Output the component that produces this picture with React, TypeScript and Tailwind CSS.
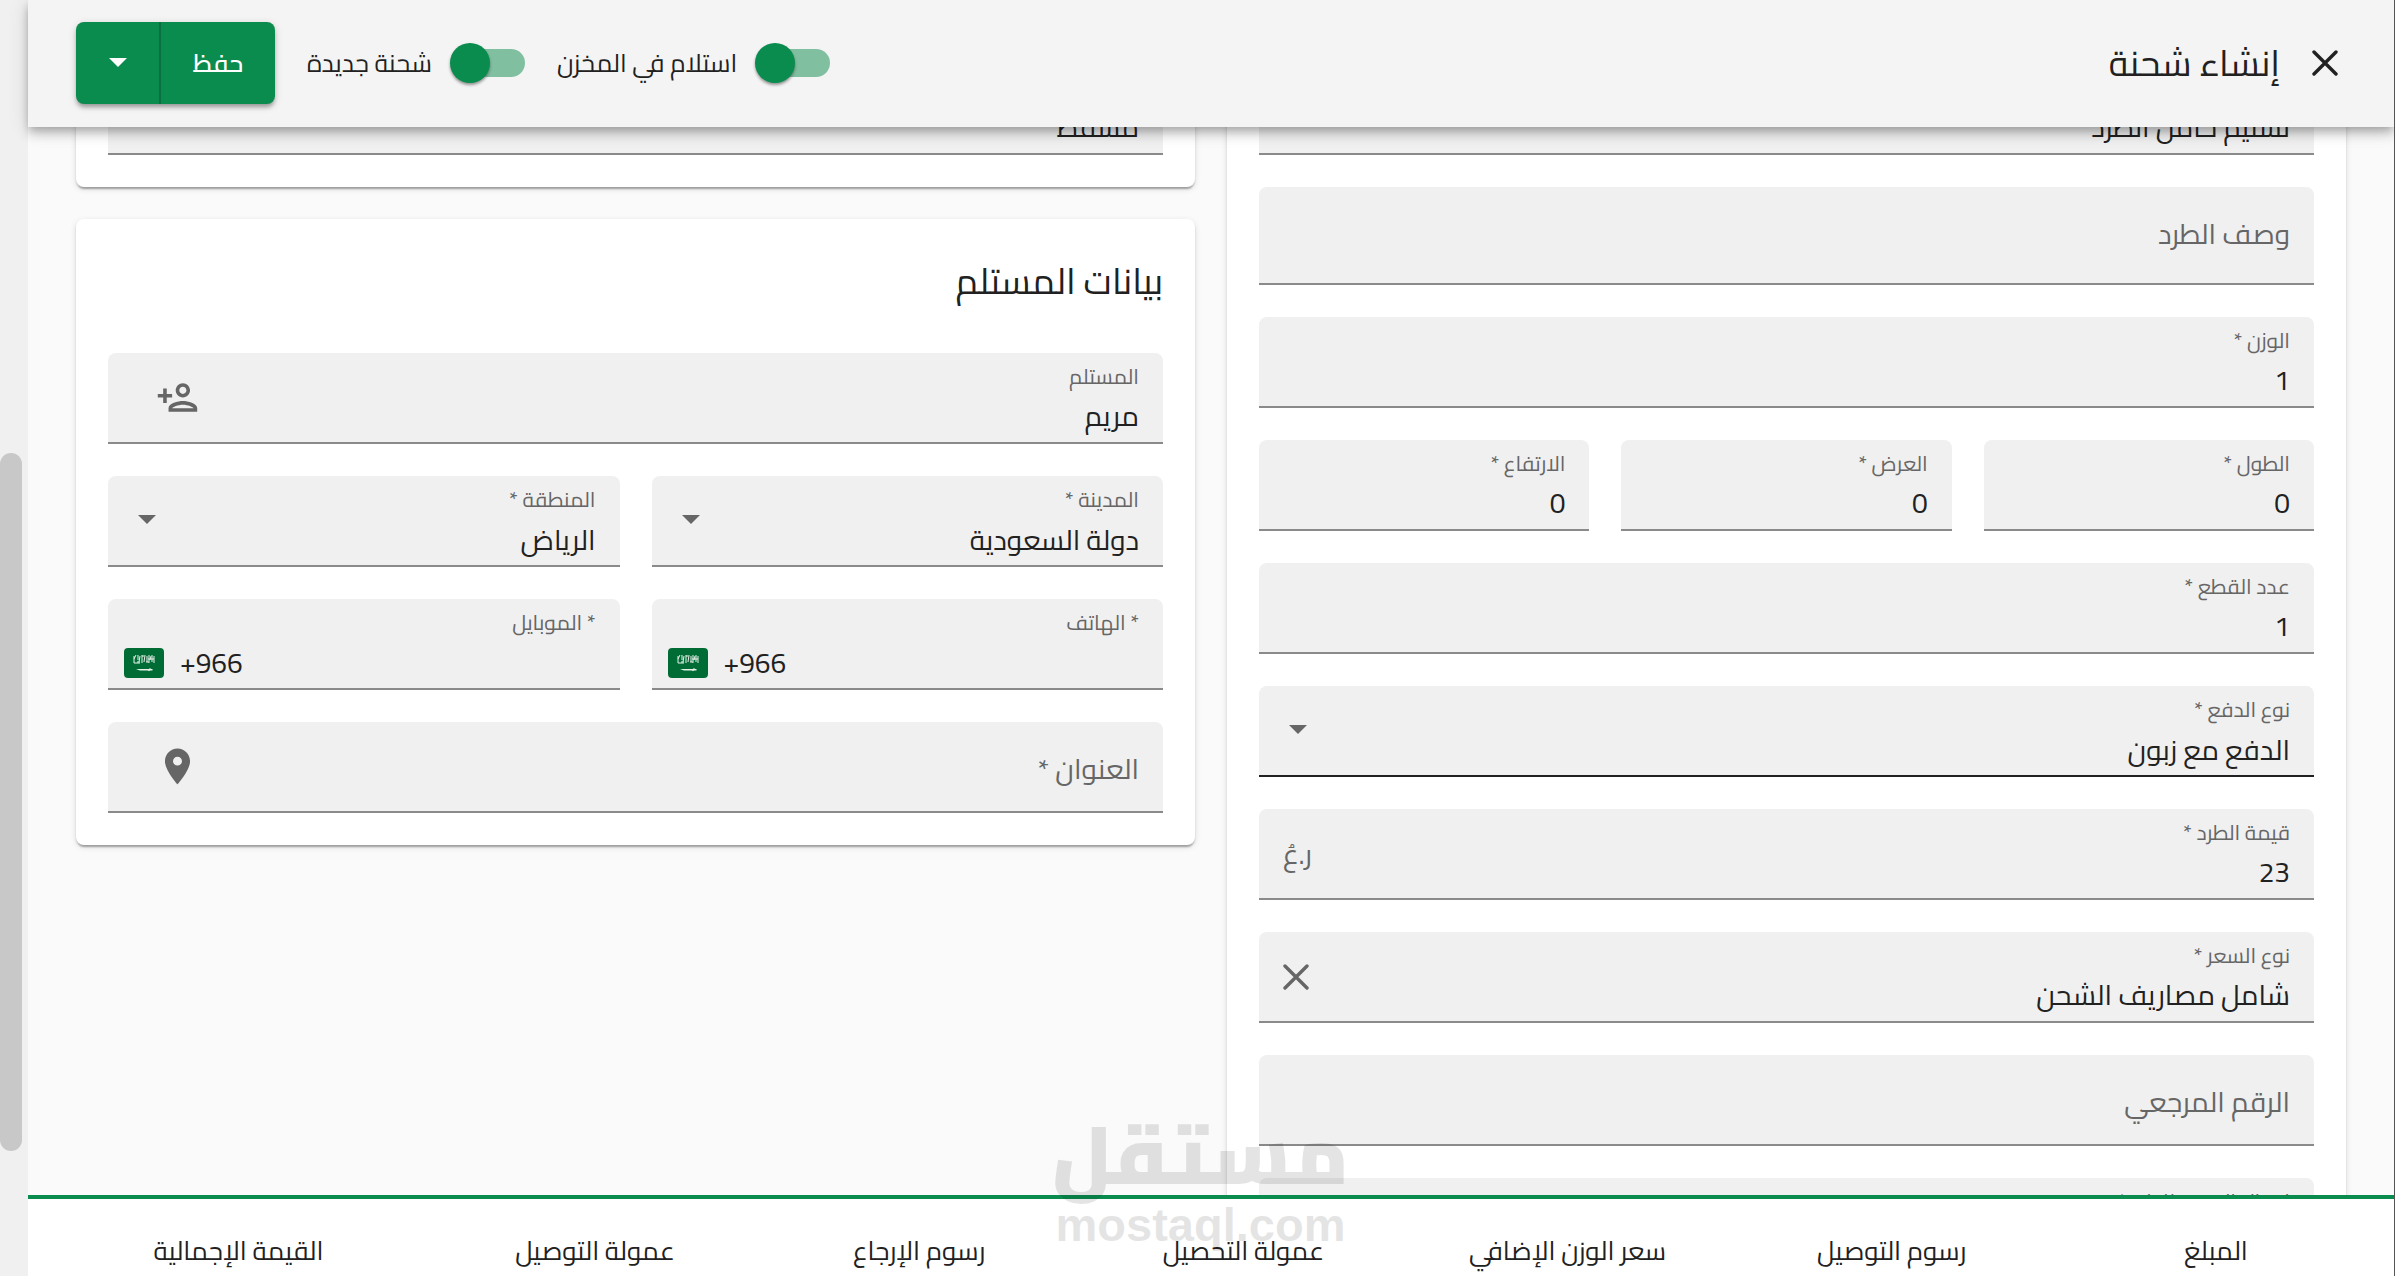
import { useId, type ReactNode } from 'react';
import { MdLocationOn } from 'react-icons/md';

const fieldBox =
  'h-[91px] rounded-t-lg border-b-2 border-[#8a8a8a] bg-[#f0f0f0] flex items-stretch min-w-0';
const controlText = 'text-[28px] text-[#212121]';

function Caret({ className = 'text-[#666]' }: { className?: string }) {
  return (
    <svg viewBox="0 0 18 9" className={`h-[9px] w-[18px] ${className}`} fill="currentColor" aria-hidden="true">
      <path d="M0 0h18L9 9z" />
    </svg>
  );
}

function Cross({ className = '' }: { className?: string }) {
  return (
    <svg
      viewBox="0 0 26 26"
      className={`size-[26px] ${className}`}
      fill="none"
      stroke="currentColor"
      strokeWidth="3.4"
      strokeLinecap="round"
      aria-hidden="true"
    >
      <path d="M2 2l22 22M24 2L2 24" />
    </svg>
  );
}

function PersonAdd() {
  return (
    <svg viewBox="0 0 24 24" className="size-[43px]" fill="currentColor" aria-hidden="true">
      <path d="M15 12c2.21 0 4-1.79 4-4s-1.79-4-4-4-4 1.79-4 4 1.79 4 4 4zm0-6c1.1 0 2 .9 2 2s-.9 2-2 2-2-.9-2-2 .9-2 2-2zm0 8c-2.67 0-8 1.34-8 4v2h16v-2c0-2.66-5.33-4-8-4zm-6 4c.22-.72 3.31-2 6-2 2.7 0 5.8 1.29 6 2H9zm-3-3v-3h3v-2H6V7H4v3H1v2h3v3z" />
    </svg>
  );
}

function SaudiFlag() {
  return (
    <svg viewBox="0 0 40 30" className="h-[30px] w-10 shrink-0" aria-hidden="true">
      <rect width="40" height="30" rx="4" fill="#006c35" />
      <g stroke="#e6f1ea" strokeWidth="1" fill="none">
        <path d="M10 8v7M12 7l-2 4M13 14h3M14 7v5M16 8l-1 6M18 7v8M20 8h-2M21 7l-1 7M23 8v6M22 14h3M25 7v8M27 8l-1 4M28 7v7M30 8v7M10 15h6M24 11h6" />
      </g>
      <path d="M12 21h13l1-1 1 1h1.500v1.500h-2.500l-1 .8-1-.8H16z" fill="#e6f1ea" />
    </svg>
  );
}

type FieldProps = { label: string; value?: string; end?: ReactNode };

function Field({ label, value = '', end }: FieldProps) {
  const id = useId();
  return (
    <div className={fieldBox}>
      <div className="flex min-w-0 flex-1 flex-col pt-1 ps-6">
        <label htmlFor={id} className="text-[21px] leading-10 text-[#666]">
          {label}
        </label>
        <input
          id={id}
          defaultValue={value}
          className={`h-[38px] w-full bg-transparent leading-[38px] outline-none ${controlText}`}
        />
      </div>
      {end}
    </div>
  );
}

function EmptyField({ label, end, tall = false }: { label: string; end?: ReactNode; tall?: boolean }) {
  const id = useId();
  return (
    <div
      className={
        tall ? 'flex h-[98px] rounded-t-lg border-b-2 border-[#8a8a8a] bg-[#f0f0f0] pb-0.5' : `${fieldBox} pt-1`
      }
    >
      <label htmlFor={id} className="sr-only">
        {label}
      </label>
      <input
        id={id}
        placeholder={label}
        className="min-w-0 flex-1 bg-transparent ps-6 text-[28px] text-[#212121] outline-none placeholder:text-[#666] placeholder:opacity-100"
      />
      {end}
    </div>
  );
}

function SelectField({ label, value, active = false }: { label: string; value: string; active?: boolean }) {
  const id = useId();
  return (
    <div
      className={
        active
          ? 'flex h-[91px] min-w-0 items-stretch rounded-t-lg border-b-2 border-[#212121] bg-[#f0f0f0]'
          : fieldBox
      }
    >
      <div className="flex min-w-0 flex-1 flex-col pt-1 ps-6">
        <label htmlFor={id} className="text-[21px] leading-10 text-[#666]">
          {label}
        </label>
        <select
          id={id}
          className={`h-10 w-full appearance-none bg-transparent leading-10 outline-none ${controlText}`}
        >
          <option>{value}</option>
        </select>
      </div>
      <span className="flex items-center pe-[30px] pb-0.5">
        <Caret />
      </span>
    </div>
  );
}

function PhoneField({ label }: { label: string }) {
  const id = useId();
  return (
    <div className={fieldBox}>
      <div className="flex min-w-0 flex-1 flex-col pt-1">
        <label htmlFor={id} className="ps-6 text-[21px] leading-10 text-[#666]">
          {label}
        </label>
        <div dir="ltr" className="flex items-center gap-4 px-4">
          <SaudiFlag />
          <input
            id={id}
            type="tel"
            defaultValue="+966"
            className={`h-10 min-w-0 flex-1 bg-transparent leading-10 outline-none ${controlText}`}
          />
        </div>
      </div>
    </div>
  );
}

function Switch({ label }: { label: string }) {
  return (
    <label className="flex cursor-pointer items-center gap-[18px]">
      <span className="relative flex h-10 w-[75px] items-center">
        <input type="checkbox" role="switch" defaultChecked className="peer sr-only" />
        <span className="h-7 w-[72px] rounded-full bg-[#81bfa1]" />
        <span className="absolute left-0 size-10 rounded-full bg-[#0b8c4f] shadow-[0_2px_3px_rgba(0,0,0,0.4)]" />
      </span>
      <span className="text-[25px] leading-10 text-[#212121]">{label}</span>
    </label>
  );
}

function Card({ children }: { children: ReactNode }) {
  return (
    <section className="flex flex-col gap-8 rounded-lg bg-white p-8 shadow-[0_4px_2px_-2px_rgba(0,0,0,0.2),0_2px_2px_rgba(0,0,0,0.14),0_2px_6px_rgba(0,0,0,0.12)]">
      {children}
    </section>
  );
}

const totals = [
  'المبلغ',
  'رسوم التوصيل',
  'سعر الوزن الإضافي',
  'عمولة التحصيل',
  'رسوم الإرجاع',
  'عمولة التوصيل',
  'القيمة الإجمالية',
];

export default function App() {
  return (
    <div
      dir="rtl"
      className="relative flex h-screen overflow-hidden border-r border-[#555] bg-[#fafafa] font-['Cairo','Noto_Sans_Arabic','DejaVu_Sans',sans-serif] text-[#212121]"
    >
      <div className="flex min-w-0 flex-1 flex-col">
        <header className="z-10 flex h-[127px] shrink-0 items-center justify-between bg-[#f4f4f4] ps-14 pe-12 pb-0.5 shadow-[0_4px_8px_-2px_rgba(0,0,0,0.2),0_8px_10px_rgba(0,0,0,0.14),0_2px_20px_rgba(0,0,0,0.12)]">
          <div className="flex items-center gap-8">
            <button type="button" aria-label="إغلاق">
              <Cross />
            </button>
            <h1 className="text-[36px] leading-10">إنشاء شحنة</h1>
          </div>
          <div className="flex items-center gap-8">
            <Switch label="استلام في المخزن" />
            <Switch label="شحنة جديدة" />
            <div className="flex h-[82px] overflow-hidden rounded-lg bg-[#0b8c4f] text-white shadow-[0_4px_4px_-1px_rgba(0,0,0,0.3),0_2px_8px_rgba(0,0,0,0.15)]">
              <button type="button" className="w-[116px] border-l-2 border-[#08703f] text-[25px] font-semibold">
                حفظ
              </button>
              <button type="button" aria-label="المزيد" className="flex w-[83px] items-center justify-center">
                <Caret className="text-white" />
              </button>
            </div>
          </div>
        </header>

        <main className="min-h-0 flex-1 overflow-hidden px-12">
          <div className="-mt-[95px] grid grid-cols-2 items-start gap-8">
            <Card>
              <Field label="محتوى الطرد *" value="تسليم حامل الطرد" />
              <EmptyField label="وصف الطرد" tall />
              <Field label="الوزن *" value="1" />
              <div className="grid grid-cols-3 gap-8">
                <Field label="الطول *" value="0" />
                <Field label="العرض *" value="0" />
                <Field label="الارتفاع *" value="0" />
              </div>
              <Field label="عدد القطع *" value="1" />
              <SelectField label="نوع الدفع *" value="الدفع مع زبون" active />
              <Field
                label="قيمة الطرد *"
                value="23"
                end={<span className="flex items-center pe-6 text-[28px] text-[#666]">ر.عُ</span>}
              />
              <Field
                label="نوع السعر *"
                value="شامل مصاريف الشحن"
                end={
                  <button type="button" aria-label="مسح" className="pe-6 text-[#666]">
                    <Cross />
                  </button>
                }
              />
              <EmptyField label="الرقم المرجعي" />
              <Field label="إيصال القبض للطرد *" />
            </Card>

            <div className="flex flex-col gap-8">
              <Card>
                <Field label="المدينة" value="مسقط" />
              </Card>
              <Card>
                <h2 className="pt-2 pb-[18px] text-[36px] leading-11">بيانات المستلم</h2>
                <Field
                  label="المستلم"
                  value="مريم"
                  end={
                    <button type="button" aria-label="إضافة مستلم" className="pe-12 text-[#666]">
                      <PersonAdd />
                    </button>
                  }
                />
                <div className="grid grid-cols-2 gap-8">
                  <SelectField label="المدينة *" value="دولة السعودية" />
                  <SelectField label="المنطقة *" value="الرياض" />
                </div>
                <div className="grid grid-cols-2 gap-8">
                  <PhoneField label="* الهاتف" />
                  <PhoneField label="* الموبايل" />
                </div>
                <EmptyField
                  label="العنوان *"
                  end={
                    <button type="button" aria-label="تحديد الموقع" className="pe-12 pb-1 text-[#666]">
                      <MdLocationOn className="size-[43px]" />
                    </button>
                  }
                />
              </Card>
            </div>
          </div>
        </main>

        <footer className="grid h-[81px] shrink-0 grid-cols-[repeat(6,1fr)_1.2fr] overflow-hidden border-t-4 border-[#0b8c4f] bg-white px-4 pt-8 text-center text-[26px] leading-10">
          {totals.map((t) => (
            <span key={t}>{t}</span>
          ))}
        </footer>
      </div>

      <div className="w-7 shrink-0 bg-[#f0f0f0] pt-[453px]">
        <div className="ms-auto h-[698px] w-[22px] rounded-full bg-[#c8c8c8]" />
      </div>

      <div
        aria-hidden="true"
        className="pointer-events-none absolute bottom-7 left-[1052px] z-20 flex flex-col items-center text-black opacity-10"
      >
        <span className="text-[82px] leading-[96px] font-black">مستقل</span>
        <span dir="ltr" className="font-['Liberation_Sans',sans-serif] text-[47px] leading-[46px] font-bold">
          mostaql.com
        </span>
      </div>
    </div>
  );
}
